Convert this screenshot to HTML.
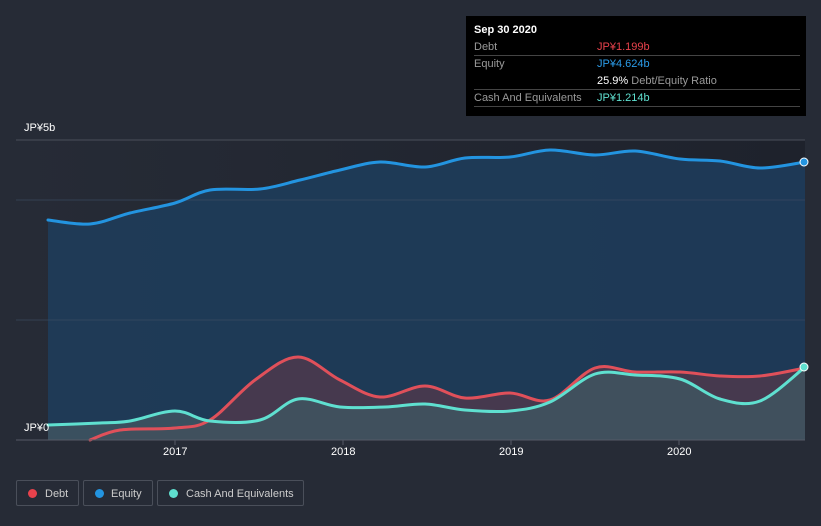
<!DOCTYPE html>
<html><head><meta charset="utf-8"><style>
body{margin:0;width:821px;height:526px;background:#262b36;font-family:"Liberation Sans","Noto Sans CJK JP",sans-serif;overflow:hidden;position:relative}
.tip{position:absolute;left:466px;top:16px;width:340px;height:100px;background:#000;color:#9a9a9a;font-size:11px}
.tip .r{position:absolute;left:8px;width:326px;border-bottom:1px solid #444;height:16px;line-height:16px}
.lab{position:absolute;color:#fff;font-size:11px}
.leg{position:absolute;top:480px;height:26px;border:1px solid #4a4f5a;border-radius:2px;color:#ccc;font-size:11px;line-height:26px;box-sizing:border-box;white-space:nowrap}
.leg i{position:absolute;left:11px;top:8px;width:9px;height:9px;border-radius:50%}
</style></head><body>
<svg width="821" height="526" style="position:absolute;left:0;top:0">
<defs><linearGradient id="bg" x1="0" y1="0" x2="1" y2="0"><stop offset="0" stop-color="#262b36"/><stop offset="1" stop-color="#1e222c"/></linearGradient></defs>
<rect x="16" y="140" width="789" height="300" fill="url(#bg)"/>
<path id="ea" fill="#1f3b58" opacity="0.95"/>
<line x1="16" y1="140" x2="805" y2="140" stroke="#4a4f5a"/>
<line x1="16" y1="200" x2="805" y2="200" stroke="#3a4a60" opacity=".7"/>
<line x1="16" y1="320" x2="805" y2="320" stroke="#3a4a60" opacity=".7"/>
<path id="da" fill="#4a3a4e" opacity="0.9"/>
<path id="ca" fill="#3f5560" opacity="0.85"/>
<g fill="none" stroke-width="3" stroke-linejoin="round" stroke-linecap="round">
<path id="el" stroke="#2394e0"/>
<path id="dl" stroke="#e0505a"/>
<path id="cl" stroke="#5fe0d0"/>
</g>
<circle cx="804" cy="162" r="4" fill="#2394e0" stroke="#fff" stroke-width="1"/>
<circle cx="804" cy="367" r="4" fill="#5fe0d0" stroke="#fff" stroke-width="1"/>
<line x1="16" y1="440" x2="805" y2="440" stroke="#555a66"/>
<g stroke="#555a66"><line x1="175" y1="440" x2="175" y2="445"/><line x1="343" y1="440" x2="343" y2="445"/><line x1="511" y1="440" x2="511" y2="445"/><line x1="679" y1="440" x2="679" y2="445"/></g>
</svg>
<script>
function sm(p){var d="M"+p[0][0]+","+p[0][1];for(var i=0;i<p.length-1;i++){var a=p[i-1]||p[i],b=p[i],c=p[i+1],e=p[i+2]||c;d+=" C"+(b[0]+(c[0]-a[0])/6)+","+(b[1]+(c[1]-a[1])/6)+" "+(c[0]-(e[0]-b[0])/6)+","+(c[1]-(e[1]-b[1])/6)+" "+c[0]+","+c[1];}return d;}
function P(s){return s.split(" ").map(function(t){return t.split(",").map(Number)});}
var E=P("48,220 90,224 130,213 175,203 210,190 260,189 300,180 340,170 380,162 425,167 465,158 510,157 550,150 595,155 635,151 680,159 720,161 760,168 805,162");
var D=P("90,440 120,430 175,428 210,420 255,380 298,357 340,380 380,397 425,386 465,398 510,393 550,400 595,368 635,372 680,372 720,376 760,376 805,368");
var C=P("48,425 100,423 130,421 175,411 210,421 260,420 298,399 340,407 385,407 425,404 465,410 510,411 550,402 595,374 635,375 680,379 720,399 760,401 805,367");
function set(l,a,p){var d=sm(p);document.getElementById(l).setAttribute("d",d);document.getElementById(a).setAttribute("d",d+" L805,440 L"+p[0][0]+",440 Z");}
set("el","ea",E);set("dl","da",D);set("cl","ca",C);
</script>
<div class="lab" style="left:24px;top:122px">JP¥5b</div>
<div class="lab" style="left:24px;top:422px">JP¥0</div>
<div class="lab" style="left:163px;top:446px">2017</div>
<div class="lab" style="left:331px;top:446px">2018</div>
<div class="lab" style="left:499px;top:446px">2019</div>
<div class="lab" style="left:667px;top:446px">2020</div>
<div class="tip">
<div style="position:absolute;left:8px;top:8px;color:#fff;font-weight:bold">Sep 30 2020</div>
<div class="r" style="top:23px">Debt<span style="position:absolute;left:123px;color:#e8424c">JP¥1.199b</span></div>
<div class="r" style="top:40px;height:33px">Equity<span style="position:absolute;left:123px;color:#2b9be8">JP¥4.624b</span><span style="position:absolute;left:123px;top:17px"><b style="color:#fff;font-weight:normal">25.9%</b> Debt/Equity Ratio</span></div>
<div class="r" style="top:74px">Cash And Equivalents<span style="position:absolute;left:123px;color:#5fe0d0">JP¥1.214b</span></div>
</div>
<div class="leg" style="left:16px;width:63px"><i style="background:#e8424c"></i><span style="position:absolute;left:28px">Debt</span></div>
<div class="leg" style="left:83px;width:70px"><i style="background:#2394e0"></i><span style="position:absolute;left:27px">Equity</span></div>
<div class="leg" style="left:157px;width:147px"><i style="background:#5fe0d0"></i><span style="position:absolute;left:28px">Cash And Equivalents</span></div>
</body></html>
